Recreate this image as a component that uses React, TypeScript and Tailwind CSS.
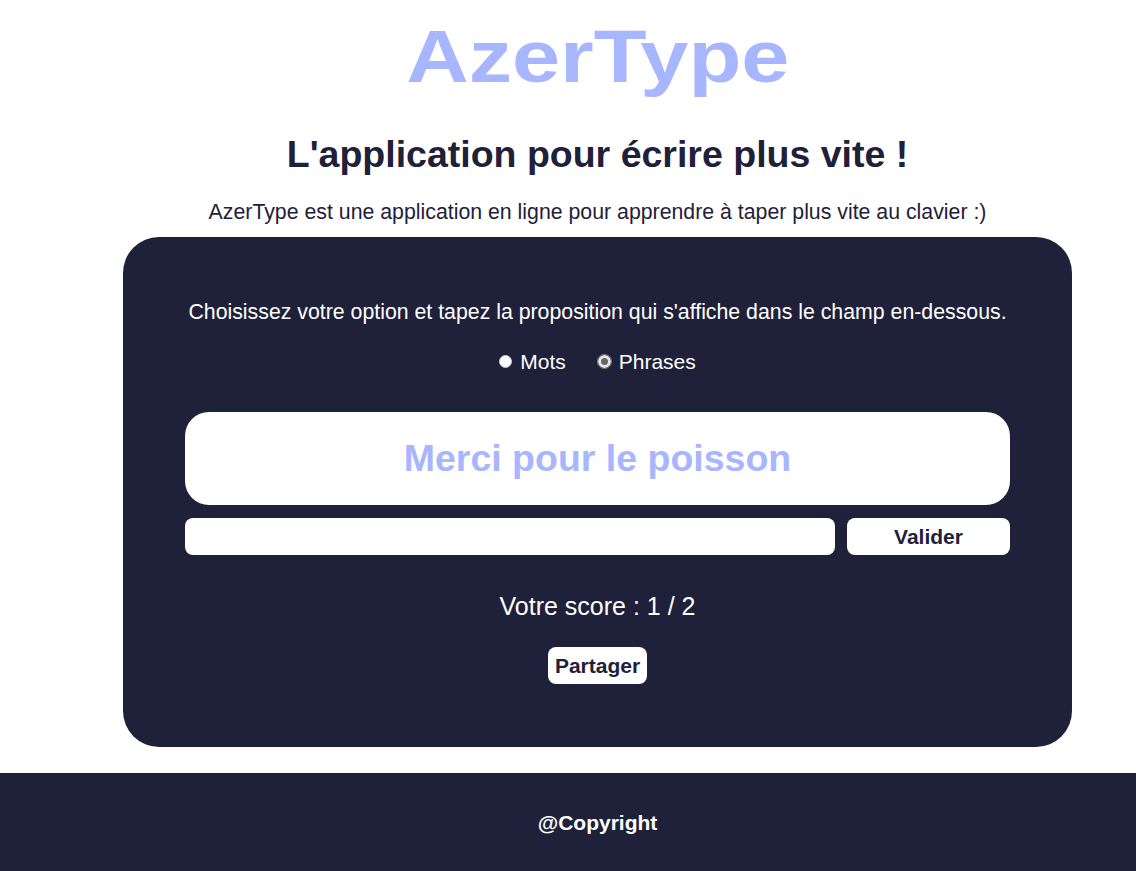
import React from "react";

export default function App() {
  return (
    <div
      className="w-full overflow-hidden bg-white text-[#1f2039]"
      style={{ fontFamily: '"Liberation Sans", Arial, sans-serif' }}
    >
      <div className="w-[1195px]">
        <header className="text-center">
          <h1 className="pt-[20px] text-[74px] leading-none font-bold text-[#a8b5ff]">
            <span className="inline-block scale-x-[1.17]">AzerType</span>
          </h1>
          <h2 className="mt-[42px] text-[37.5px] leading-none font-bold">
            L'application pour écrire plus vite !
          </h2>
          <p className="mt-[28px] text-[21.3px] leading-none">
            AzerType est une application en ligne pour apprendre à taper plus vite au clavier :)
          </p>
        </header>

        <main className="mx-[123px] mt-[14px] rounded-[36px] bg-[#1f2039] px-[62px] pt-[65px] pb-[63px] text-center text-white">
          <p className="text-[21.3px] leading-none">
            Choisissez votre option et tapez la proposition qui s'affiche dans le champ en-dessous.
          </p>
          <div className="mt-[28px] flex items-center justify-center gap-[32px] text-[21px] leading-none">
            <label className="flex items-center gap-[8px]">
              <input
                type="radio"
                name="option"
                value="mots"
                className="h-[13px] w-[13px] appearance-none rounded-full border border-[#d0d0d0] bg-white"
              />
              <span>Mots</span>
            </label>
            <label className="flex items-center gap-[8px]">
              <input
                type="radio"
                name="option"
                value="phrases"
                defaultChecked
                className="h-[13px] w-[13px] appearance-none rounded-full border-[3px] border-[#e8e8e8] bg-[#666] outline outline-1 outline-[#888]"
              />
              <span>Phrases</span>
            </label>
          </div>

          <div className="mt-[40px] flex h-[93px] items-center justify-center rounded-[24px] bg-white">
            <span className="text-[37.5px] leading-none font-bold text-[#a8b5ff]">
              Merci pour le poisson
            </span>
          </div>

          <div className="mt-[13px] flex gap-[12px]">
            <input
              type="text"
              className="h-[37px] flex-1 rounded-lg bg-white px-3 text-[18px] text-[#1f2039] outline-none"
            />
            <button className="h-[37px] w-[163px] rounded-lg bg-white text-[21px] font-bold text-[#1f2039]">
              Valider
            </button>
          </div>

          <p className="mt-[39px] text-[25px] leading-none">Votre score : 1 / 2</p>

          <button className="mt-[28px] h-[37px] w-[99px] rounded-lg bg-white text-[21px] font-bold text-[#1f2039]">
            Partager
          </button>
        </main>

        <footer className="mt-[26px] flex h-[100px] items-center justify-center bg-[#1f2039]">
          <span className="text-[21px] font-bold text-white">@Copyright</span>
        </footer>
      </div>
    </div>
  );
}
